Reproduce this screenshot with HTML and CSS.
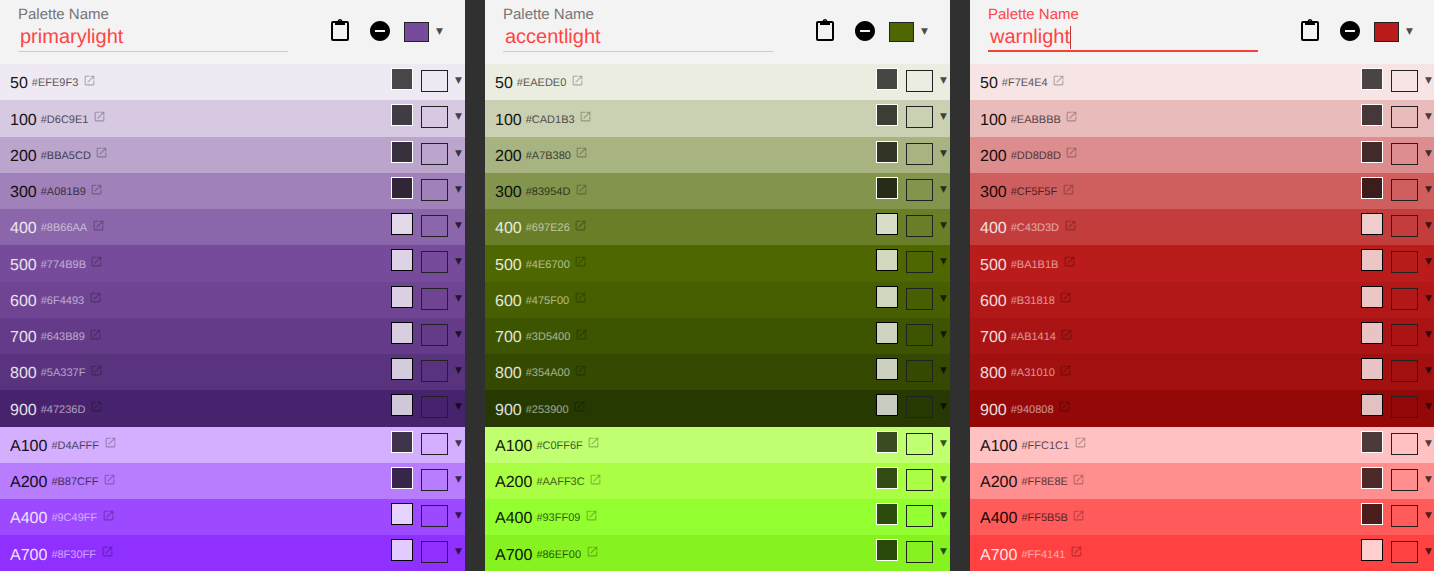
FILE: index.html
```html
<!DOCTYPE html>
<html lang="en">
<head>
  <meta charset="UTF-8">
  <meta name="viewport" content="width=device-width, initial-scale=1.0">
  <title>Palette Editor</title>
  <link rel="stylesheet" href="styles.css">
</head>
<body>
  <svg class="sprites" aria-hidden="true">
    <symbol id="ext" viewBox="0 0 24 24"><path d="M19 19H5V5h7V3H5c-1.11 0-2 .9-2 2v14c0 1.1.89 2 2 2h14c1.1 0 2-.9 2-2v-7h-2v7zM14 3v2h3.59l-9.83 9.83 1.41 1.41L19 6.41V10h2V3h-7z"/></symbol>
    <symbol id="clip" viewBox="0 0 18 22"><path d="M2 3h14a1 1 0 0 1 1 1v16a1 1 0 0 1-1 1H2a1 1 0 0 1-1-1V4a1 1 0 0 1 1-1z" fill="none" stroke="#000" stroke-width="2"/><path fill-rule="evenodd" d="M4 2h2.6C7 .8 7.9 0 9 0s2 .8 2.4 2H14v4H4zM9 1.4a1 1 0 1 0 0 2 1 1 0 0 0 0-2z"/></symbol>
    <symbol id="minus" viewBox="0 0 24 24"><path d="M12 2C6.48 2 2 6.48 2 12s4.48 10 10 10 10-4.48 10-10S17.52 2 12 2zm5 11H7v-2h10v2z"/></symbol>
  </svg>

  <div class="palettes">
    <section class="palette">
      <header class="head">
        <div class="name-field">
          <div class="name-label">Palette Name</div>
          <div class="name-value">primarylight</div>
        </div>
        <svg class="clip-icon"><use href="#clip"/></svg>
        <svg class="minus-icon"><use href="#minus"/></svg>
        <span class="base-swatch c-774B9B"></span><span class="base-arrow">▼</span>
      </header>
      <div class="row c-EFE9F3 dark"><span class="num">50</span><span class="hex">#EFE9F3</span><svg class="ext"><use href="#ext"/></svg><span class="tools"><i class="contrast"></i><i class="picker"></i><b class="arrow">▼</b></span></div>
      <div class="row c-D6C9E1 dark"><span class="num">100</span><span class="hex">#D6C9E1</span><svg class="ext"><use href="#ext"/></svg><span class="tools"><i class="contrast"></i><i class="picker"></i><b class="arrow">▼</b></span></div>
      <div class="row c-BBA5CD dark"><span class="num">200</span><span class="hex">#BBA5CD</span><svg class="ext"><use href="#ext"/></svg><span class="tools"><i class="contrast"></i><i class="picker"></i><b class="arrow">▼</b></span></div>
      <div class="row c-A081B9 dark"><span class="num">300</span><span class="hex">#A081B9</span><svg class="ext"><use href="#ext"/></svg><span class="tools"><i class="contrast"></i><i class="picker"></i><b class="arrow">▼</b></span></div>
      <div class="row c-8B66AA light"><span class="num">400</span><span class="hex">#8B66AA</span><svg class="ext"><use href="#ext"/></svg><span class="tools"><i class="contrast"></i><i class="picker"></i><b class="arrow">▼</b></span></div>
      <div class="row c-774B9B light"><span class="num">500</span><span class="hex">#774B9B</span><svg class="ext"><use href="#ext"/></svg><span class="tools"><i class="contrast"></i><i class="picker"></i><b class="arrow">▼</b></span></div>
      <div class="row c-6F4493 light"><span class="num">600</span><span class="hex">#6F4493</span><svg class="ext"><use href="#ext"/></svg><span class="tools"><i class="contrast"></i><i class="picker"></i><b class="arrow">▼</b></span></div>
      <div class="row c-643B89 light"><span class="num">700</span><span class="hex">#643B89</span><svg class="ext"><use href="#ext"/></svg><span class="tools"><i class="contrast"></i><i class="picker"></i><b class="arrow">▼</b></span></div>
      <div class="row c-5A337F light"><span class="num">800</span><span class="hex">#5A337F</span><svg class="ext"><use href="#ext"/></svg><span class="tools"><i class="contrast"></i><i class="picker"></i><b class="arrow">▼</b></span></div>
      <div class="row c-47236D light"><span class="num">900</span><span class="hex">#47236D</span><svg class="ext"><use href="#ext"/></svg><span class="tools"><i class="contrast"></i><i class="picker"></i><b class="arrow">▼</b></span></div>
      <div class="row c-D4AFFF dark"><span class="num">A100</span><span class="hex">#D4AFFF</span><svg class="ext"><use href="#ext"/></svg><span class="tools"><i class="contrast"></i><i class="picker"></i><b class="arrow">▼</b></span></div>
      <div class="row c-B87CFF dark"><span class="num">A200</span><span class="hex">#B87CFF</span><svg class="ext"><use href="#ext"/></svg><span class="tools"><i class="contrast"></i><i class="picker"></i><b class="arrow">▼</b></span></div>
      <div class="row c-9C49FF light"><span class="num">A400</span><span class="hex">#9C49FF</span><svg class="ext"><use href="#ext"/></svg><span class="tools"><i class="contrast"></i><i class="picker"></i><b class="arrow">▼</b></span></div>
      <div class="row c-8F30FF light"><span class="num">A700</span><span class="hex">#8F30FF</span><svg class="ext"><use href="#ext"/></svg><span class="tools"><i class="contrast"></i><i class="picker"></i><b class="arrow">▼</b></span></div>
    </section>

    <section class="palette">
      <header class="head">
        <div class="name-field">
          <div class="name-label">Palette Name</div>
          <div class="name-value">accentlight</div>
        </div>
        <svg class="clip-icon"><use href="#clip"/></svg>
        <svg class="minus-icon"><use href="#minus"/></svg>
        <span class="base-swatch c-4E6700"></span><span class="base-arrow">▼</span>
      </header>
      <div class="row c-EAEDE0 dark"><span class="num">50</span><span class="hex">#EAEDE0</span><svg class="ext"><use href="#ext"/></svg><span class="tools"><i class="contrast"></i><i class="picker"></i><b class="arrow">▼</b></span></div>
      <div class="row c-CAD1B3 dark"><span class="num">100</span><span class="hex">#CAD1B3</span><svg class="ext"><use href="#ext"/></svg><span class="tools"><i class="contrast"></i><i class="picker"></i><b class="arrow">▼</b></span></div>
      <div class="row c-A7B380 dark"><span class="num">200</span><span class="hex">#A7B380</span><svg class="ext"><use href="#ext"/></svg><span class="tools"><i class="contrast"></i><i class="picker"></i><b class="arrow">▼</b></span></div>
      <div class="row c-83954D dark"><span class="num">300</span><span class="hex">#83954D</span><svg class="ext"><use href="#ext"/></svg><span class="tools"><i class="contrast"></i><i class="picker"></i><b class="arrow">▼</b></span></div>
      <div class="row c-697E26 light"><span class="num">400</span><span class="hex">#697E26</span><svg class="ext"><use href="#ext"/></svg><span class="tools"><i class="contrast"></i><i class="picker"></i><b class="arrow">▼</b></span></div>
      <div class="row c-4E6700 light"><span class="num">500</span><span class="hex">#4E6700</span><svg class="ext"><use href="#ext"/></svg><span class="tools"><i class="contrast"></i><i class="picker"></i><b class="arrow">▼</b></span></div>
      <div class="row c-475F00 light"><span class="num">600</span><span class="hex">#475F00</span><svg class="ext"><use href="#ext"/></svg><span class="tools"><i class="contrast"></i><i class="picker"></i><b class="arrow">▼</b></span></div>
      <div class="row c-3D5400 light"><span class="num">700</span><span class="hex">#3D5400</span><svg class="ext"><use href="#ext"/></svg><span class="tools"><i class="contrast"></i><i class="picker"></i><b class="arrow">▼</b></span></div>
      <div class="row c-354A00 light"><span class="num">800</span><span class="hex">#354A00</span><svg class="ext"><use href="#ext"/></svg><span class="tools"><i class="contrast"></i><i class="picker"></i><b class="arrow">▼</b></span></div>
      <div class="row c-253900 light"><span class="num">900</span><span class="hex">#253900</span><svg class="ext"><use href="#ext"/></svg><span class="tools"><i class="contrast"></i><i class="picker"></i><b class="arrow">▼</b></span></div>
      <div class="row c-C0FF6F dark"><span class="num">A100</span><span class="hex">#C0FF6F</span><svg class="ext"><use href="#ext"/></svg><span class="tools"><i class="contrast"></i><i class="picker"></i><b class="arrow">▼</b></span></div>
      <div class="row c-AAFF3C dark"><span class="num">A200</span><span class="hex">#AAFF3C</span><svg class="ext"><use href="#ext"/></svg><span class="tools"><i class="contrast"></i><i class="picker"></i><b class="arrow">▼</b></span></div>
      <div class="row c-93FF09 dark"><span class="num">A400</span><span class="hex">#93FF09</span><svg class="ext"><use href="#ext"/></svg><span class="tools"><i class="contrast"></i><i class="picker"></i><b class="arrow">▼</b></span></div>
      <div class="row c-86EF00 dark"><span class="num">A700</span><span class="hex">#86EF00</span><svg class="ext"><use href="#ext"/></svg><span class="tools"><i class="contrast"></i><i class="picker"></i><b class="arrow">▼</b></span></div>
    </section>

    <section class="palette">
      <header class="head focused">
        <div class="name-field">
          <div class="name-label">Palette Name</div>
          <div class="name-value">warnlight<span class="caret"></span></div>
        </div>
        <svg class="clip-icon"><use href="#clip"/></svg>
        <svg class="minus-icon"><use href="#minus"/></svg>
        <span class="base-swatch c-BA1B1B"></span><span class="base-arrow">▼</span>
      </header>
      <div class="row c-F7E4E4 dark"><span class="num">50</span><span class="hex">#F7E4E4</span><svg class="ext"><use href="#ext"/></svg><span class="tools"><i class="contrast"></i><i class="picker"></i><b class="arrow">▼</b></span></div>
      <div class="row c-EABBBB dark"><span class="num">100</span><span class="hex">#EABBBB</span><svg class="ext"><use href="#ext"/></svg><span class="tools"><i class="contrast"></i><i class="picker"></i><b class="arrow">▼</b></span></div>
      <div class="row c-DD8D8D dark"><span class="num">200</span><span class="hex">#DD8D8D</span><svg class="ext"><use href="#ext"/></svg><span class="tools"><i class="contrast"></i><i class="picker"></i><b class="arrow">▼</b></span></div>
      <div class="row c-CF5F5F dark"><span class="num">300</span><span class="hex">#CF5F5F</span><svg class="ext"><use href="#ext"/></svg><span class="tools"><i class="contrast"></i><i class="picker"></i><b class="arrow">▼</b></span></div>
      <div class="row c-C43D3D light"><span class="num">400</span><span class="hex">#C43D3D</span><svg class="ext"><use href="#ext"/></svg><span class="tools"><i class="contrast"></i><i class="picker"></i><b class="arrow">▼</b></span></div>
      <div class="row c-BA1B1B light"><span class="num">500</span><span class="hex">#BA1B1B</span><svg class="ext"><use href="#ext"/></svg><span class="tools"><i class="contrast"></i><i class="picker"></i><b class="arrow">▼</b></span></div>
      <div class="row c-B31818 light"><span class="num">600</span><span class="hex">#B31818</span><svg class="ext"><use href="#ext"/></svg><span class="tools"><i class="contrast"></i><i class="picker"></i><b class="arrow">▼</b></span></div>
      <div class="row c-AB1414 light"><span class="num">700</span><span class="hex">#AB1414</span><svg class="ext"><use href="#ext"/></svg><span class="tools"><i class="contrast"></i><i class="picker"></i><b class="arrow">▼</b></span></div>
      <div class="row c-A31010 light"><span class="num">800</span><span class="hex">#A31010</span><svg class="ext"><use href="#ext"/></svg><span class="tools"><i class="contrast"></i><i class="picker"></i><b class="arrow">▼</b></span></div>
      <div class="row c-940808 light"><span class="num">900</span><span class="hex">#940808</span><svg class="ext"><use href="#ext"/></svg><span class="tools"><i class="contrast"></i><i class="picker"></i><b class="arrow">▼</b></span></div>
      <div class="row c-FFC1C1 dark"><span class="num">A100</span><span class="hex">#FFC1C1</span><svg class="ext"><use href="#ext"/></svg><span class="tools"><i class="contrast"></i><i class="picker"></i><b class="arrow">▼</b></span></div>
      <div class="row c-FF8E8E dark"><span class="num">A200</span><span class="hex">#FF8E8E</span><svg class="ext"><use href="#ext"/></svg><span class="tools"><i class="contrast"></i><i class="picker"></i><b class="arrow">▼</b></span></div>
      <div class="row c-FF5B5B dark"><span class="num">A400</span><span class="hex">#FF5B5B</span><svg class="ext"><use href="#ext"/></svg><span class="tools"><i class="contrast"></i><i class="picker"></i><b class="arrow">▼</b></span></div>
      <div class="row c-FF4141 light"><span class="num">A700</span><span class="hex">#FF4141</span><svg class="ext"><use href="#ext"/></svg><span class="tools"><i class="contrast"></i><i class="picker"></i><b class="arrow">▼</b></span></div>
    </section>
  </div>
</body>
</html>
```
FILE: styles.css
```css
html, body {
  height: 100%;
}
body {
  margin: 0;
  background: #303030;
  font-family: "Liberation Sans", Arial, sans-serif;
  text-rendering: geometricPrecision;
  overflow: hidden;
}
.sprites {
  display: none;
}
.palettes {
  display: flex;
  gap: 20px;
}
.palette {
  flex: 0 0 465px;
}

/* header */
.head {
  height: 64px;
  box-sizing: border-box;
  background: #f3f3f3;
  display: flex;
  align-items: flex-start;
  padding: 0 22px 0 18px;
}
.name-field {
  width: 270px;
  height: 52px;
  box-sizing: border-box;
  border-bottom: 1px solid #ccc;
  margin-right: auto;
  padding-top: 6px;
}
.name-label {
  font-size: 15px;
  line-height: 17px;
  color: #757575;
}
.name-value {
  font-size: 20px;
  line-height: 23px;
  margin-top: 3px;
  padding-left: 2px;
  color: #f44;
}
.focused .name-field {
  border-bottom: 2px solid #f44336;
}
.focused .name-label {
  color: #f44;
}
.caret {
  display: inline-block;
  width: 1px;
  height: 23px;
  background: #c33;
  vertical-align: top;
}
.clip-icon {
  width: 18px;
  height: 22px;
  margin: 19px 19px 0 0;
}
.minus-icon {
  width: 24px;
  height: 24px;
  margin: 19px 12px 0 0;
}
.base-swatch {
  width: 25px;
  height: 20px;
  box-sizing: border-box;
  border: 1px solid #222;
  margin: 22px 7px 0 0;
}
.base-arrow {
  width: 7px;
  font: 9px/8px "DejaVu Sans", sans-serif;
  color: rgba(0, 0, 0, .7);
  margin-top: 28px;
}

/* rows */
.row {
  height: 36.25px;
  box-sizing: border-box;
  padding: 9px 3px 0 10px;
  white-space: nowrap;
  display: flex;
  align-items: flex-start;
}
.dark {
  color: #000;
}
.light {
  color: #fff;
}
.num {
  font-size: 16px;
  line-height: 18px;
  opacity: .9;
  margin: 2.25px 4px 0 0;
}
.light .num {
  opacity: .85;
}
.hex {
  font-size: 11px;
  line-height: 13px;
  opacity: .65;
  margin-top: 4.25px;
}
.light .hex {
  opacity: .55;
}
.ext {
  width: 13px;
  height: 13px;
  margin: .75px 0 0 4.5px;
  fill: #000;
  opacity: .28;
}
.tools {
  margin: -5px 0 0 auto;
  display: flex;
  align-items: flex-start;
}
.contrast {
  width: 22px;
  height: 22px;
  box-sizing: border-box;
  border: 1px solid #fff;
  background: rgba(0, 0, 0, .7);
  margin-right: 8px;
}
.light .contrast {
  border-color: #000;
  background: rgba(255, 255, 255, .75);
}
.picker {
  width: 27px;
  height: 22px;
  box-sizing: border-box;
  border: 1px solid #222;
  margin: 2px 7px 0 0;
}
.arrow {
  width: 7px;
  font: 9px/8px "DejaVu Sans", sans-serif;
  color: rgba(0, 0, 0, .7);
  margin-top: 9px;
}

/* palette colours */
.c-EFE9F3 { background: #EFE9F3; }
.c-D6C9E1 { background: #D6C9E1; }
.c-BBA5CD { background: #BBA5CD; }
.c-A081B9 { background: #A081B9; }
.c-8B66AA { background: #8B66AA; }
.c-774B9B { background: #774B9B; }
.c-6F4493 { background: #6F4493; }
.c-643B89 { background: #643B89; }
.c-5A337F { background: #5A337F; }
.c-47236D { background: #47236D; }
.c-D4AFFF { background: #D4AFFF; }
.c-B87CFF { background: #B87CFF; }
.c-9C49FF { background: #9C49FF; }
.c-8F30FF { background: #8F30FF; }

.c-EAEDE0 { background: #EAEDE0; }
.c-CAD1B3 { background: #CAD1B3; }
.c-A7B380 { background: #A7B380; }
.c-83954D { background: #83954D; }
.c-697E26 { background: #697E26; }
.c-4E6700 { background: #4E6700; }
.c-475F00 { background: #475F00; }
.c-3D5400 { background: #3D5400; }
.c-354A00 { background: #354A00; }
.c-253900 { background: #253900; }
.c-C0FF6F { background: #C0FF6F; }
/* the brightest accents show a little paler than their label */
.c-AAFF3C { background: #AAFF45; }
.c-93FF09 { background: #93FF30; }
.c-86EF00 { background: #86F320; }

.c-F7E4E4 { background: #F7E4E4; }
.c-EABBBB { background: #EABBBB; }
.c-DD8D8D { background: #DD8D8D; }
.c-CF5F5F { background: #CF5F5F; }
.c-C43D3D { background: #C43D3D; }
.c-BA1B1B { background: #BA1B1B; }
.c-B31818 { background: #B31818; }
.c-AB1414 { background: #AB1414; }
.c-A31010 { background: #A31010; }
.c-940808 { background: #940808; }
.c-FFC1C1 { background: #FFC1C1; }
.c-FF8E8E { background: #FF8E8E; }
.c-FF5B5B { background: #FF5B5B; }
.c-FF4141 { background: #FF4141; }
```
